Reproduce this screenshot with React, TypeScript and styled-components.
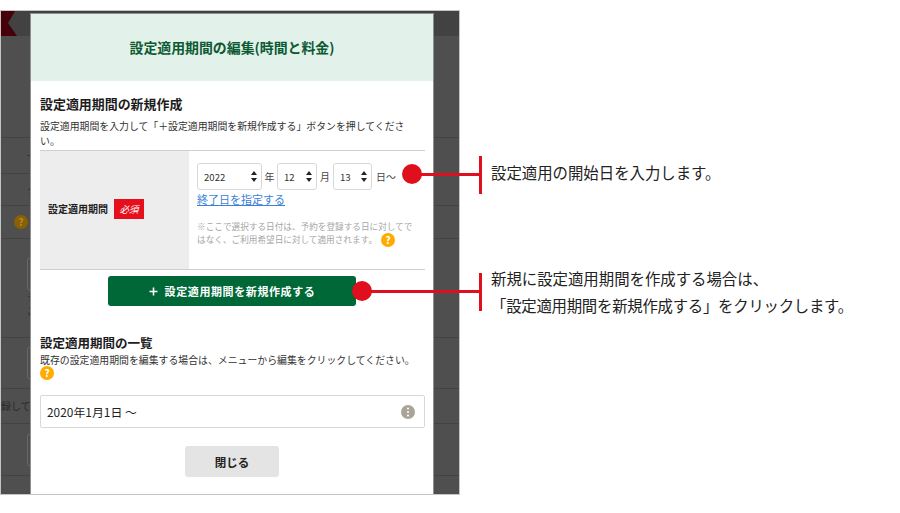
import React from "react";
import styled, { createGlobalStyle } from "styled-components";

const GlobalStyle = createGlobalStyle`
  html, body { margin: 0; padding: 0; background: #fff; }
  body {
    font-family: "Noto Sans CJK JP", "Noto Sans", sans-serif;
    color: #222;
    text-spacing-trim: space-all;
  }
  * { box-sizing: border-box; }
`;

const Page = styled.div`
  position: relative;
  width: 900px;
  height: 513px;
  overflow: hidden;
  display: flex;
  align-items: flex-start;
  padding-top: 10px;
`;

const Frame = styled.div`
  position: relative;
  width: 460px;
  height: 485px;
  flex: none;
  overflow: hidden;
  border: 1px solid #c4c4c4;
  background: #4f4f4f;
  display: flex;
  flex-direction: column;
`;

const BackHeader = styled.div`
  height: 25px;
  flex: none;
  background: #424242;
`;

const Flag = styled.svg`
  display: block;
`;

const BackRow = styled.div<{ $h: number; $pad?: number }>`
  height: ${(p) => p.$h}px;
  flex: none;
  border-bottom: 1px solid #434343;
  padding-left: ${(p) => p.$pad ?? 26}px;
  display: flex;
  flex-direction: column;
  justify-content: center;
  align-items: flex-start;
  color: #2a2a2a;
  font-size: 10px;
  line-height: 14px;
`;

const BackDash = styled.div`
  width: 6px;
  height: 1px;
  background: #1c3a66;
`;

const BackBox = styled.div`
  width: 60px;
  height: 32px;
  flex: none;
  border: 1px solid #666;
  border-radius: 2px;
`;

const BackHelp = styled.div`
  width: 14px;
  height: 14px;
  border-radius: 50%;
  background: #8b6100;
  color: #a98a4a;
  font-size: 10px;
  font-weight: 700;
  line-height: 14px;
  text-align: center;
  margin-left: 13px;
`;

const Modal = styled.section`
  position: absolute;
  left: 29px;
  top: 2px;
  width: 404px;
  height: 490px;
  background: #fff;
  border: 1px solid #8f8f8f;
  display: flex;
  flex-direction: column;
`;

const ModalHeader = styled.header`
  height: 67px;
  flex: none;
  padding-bottom: 2px;
  background: #e2f1ea;
  display: flex;
  align-items: center;
  justify-content: center;
  color: #0c5a32;
  font-size: 13.9px;
  font-weight: 700;
`;

const ModalBody = styled.div`
  padding: 14px 8px 0 9px;
  display: flex;
  flex-direction: column;
`;

const Heading = styled.h2<{ $top?: number; $size: number }>`
  margin: ${(p) => p.$top ?? 0}px 0 0;
  font-size: ${(p) => p.$size}px;
  line-height: 18px;
  font-weight: 700;
  color: #1c1c1c;
`;

const Lead = styled.p<{ $lh: number; $top: number }>`
  margin: ${(p) => p.$top}px 0 0;
  max-width: 380px;
  font-size: 9.9px;
  line-height: ${(p) => p.$lh}px;
  color: #333;
`;

const HelpIcon = styled.span<{ $size: number; $left?: number; $lift?: number }>`
  display: inline-block;
  width: ${(p) => p.$size}px;
  height: ${(p) => p.$size}px;
  margin-left: ${(p) => p.$left ?? 0}px;
  margin-top: ${(p) => -(p.$lift ?? 0)}px;
  border-radius: 50%;
  background: #ffab00;
  color: #fff;
  font-size: 10px;
  font-weight: 700;
  line-height: ${(p) => p.$size}px;
  text-align: center;
  vertical-align: top;
`;

const FormTable = styled.div`
  margin-top: 1px;
  height: 120px;
  display: flex;
  border-top: 1px solid #cfcfcf;
  border-bottom: 1px solid #cfcfcf;
`;

const LabelCell = styled.div`
  width: 149px;
  flex: none;
  background: #ededed;
  padding: 0 0 3px 8px;
  display: flex;
  align-items: center;
  gap: 6px;
`;

const FieldLabel = styled.span`
  font-size: 10px;
  font-weight: 700;
  color: #222;
`;

const RequiredBadge = styled.span`
  width: 30px;
  height: 20px;
  background: #e60f1c;
  color: #fff;
  font-size: 9.5px;
  font-style: italic;
  display: flex;
  align-items: center;
  justify-content: center;
`;

const FieldCell = styled.div`
  flex: 1;
  padding: 12px 8px 0;
  min-width: 0;
`;

const DateRow = styled.div`
  display: flex;
  align-items: center;
  height: 27px;
`;

const SelectBox = styled.div<{ $w: number }>`
  width: ${(p) => p.$w}px;
  height: 27px;
  flex: none;
  border: 1px solid #d8d8d8;
  border-radius: 3px;
  background: #fff;
  padding: 0 4px 0 6px;
  display: flex;
  align-items: center;
  justify-content: space-between;
  font-size: 9.6px;
  color: #333;
`;

const Unit = styled.span<{ $w: number }>`
  width: ${(p) => p.$w}px;
  flex: none;
  font-size: 9.9px;
  color: #444;
  text-align: center;
`;

const Tail = styled.span`
  margin-left: 4px;
  font-size: 9.9px;
  color: #444;
`;

const EndLink = styled.a`
  display: block;
  margin-top: 1px;
  font-size: 11px;
  line-height: 16px;
  color: #3b7fd6;
  text-decoration: underline;
`;

const Hint = styled.p`
  margin: 13px 0 0;
  font-size: 8.65px;
  line-height: 13px;
  color: #a6a6a6;
  max-width: 220px;
`;

const CreateButton = styled.button`
  align-self: center;
  margin: 6px 1px 0 0;
  width: 248px;
  height: 30px;
  border: none;
  border-radius: 3px;
  background: #006837;
  color: #fff;
  font-family: inherit;
  font-size: 11px;
  font-weight: 700;
  letter-spacing: 0.6px;
  display: flex;
  align-items: center;
  justify-content: center;
  gap: 7px;
`;

const PeriodCard = styled.div`
  margin-top: 14px;
  height: 33px;
  border: 1px solid #d8d8d8;
  border-radius: 2px;
  padding: 0 9px 0 6px;
  display: flex;
  align-items: center;
  justify-content: space-between;
  font-size: 11.9px;
  color: #222;
`;

const CloseButton = styled.button`
  align-self: center;
  margin: 18px 1px 0 0;
  width: 94px;
  height: 31px;
  border: none;
  border-radius: 3px;
  background: #e4e4e4;
  color: #222;
  font-family: inherit;
  font-size: 11.5px;
  font-weight: 700;
`;

const Notes = styled.div`
  margin-left: 31px;
  flex: none;
  display: flex;
  flex-direction: column;
  padding-top: 149px;
`;

const Note = styled.p<{ $top: number }>`
  margin: ${(p) => p.$top}px 0 0;
  font-size: 15.4px;
  line-height: 27px;
  color: #222;
  white-space: nowrap;
`;

const TightLine = styled.span`
  letter-spacing: -0.25px;
`;

const Dot = styled.div<{ $x: number; $y: number }>`
  position: absolute;
  left: ${(p) => p.$x - 10}px;
  top: ${(p) => p.$y - 10}px;
  width: 20px;
  height: 20px;
  border-radius: 50%;
  background: #e00f1d;
`;

const Leader = styled.div<{ $x: number; $y: number; $w: number }>`
  position: absolute;
  left: ${(p) => p.$x}px;
  top: ${(p) => p.$y}px;
  width: ${(p) => p.$w}px;
  height: 3px;
  background: #e00f1d;
`;

const Bar = styled.div<{ $y: number }>`
  position: absolute;
  left: 479px;
  top: ${(p) => p.$y}px;
  width: 3px;
  height: 38px;
  background: #e00f1d;
`;

const Arrows = () => (
  <svg width="6" height="11" viewBox="0 0 6 11">
    <path d="M3 0 L6 4 H0 Z M3 11 L0 7 H6 Z" fill="#222" />
  </svg>
);

const KebabIcon = () => (
  <svg width="14" height="14" viewBox="0 0 15 15">
    <circle cx="7.5" cy="7.5" r="7.5" fill="#aaa498" />
    <circle cx="7.5" cy="3.8" r="1.1" fill="#fff" />
    <circle cx="7.5" cy="7.5" r="1.1" fill="#fff" />
    <circle cx="7.5" cy="11.2" r="1.1" fill="#fff" />
  </svg>
);

const PlusIcon = () => (
  <svg width="9" height="9" viewBox="0 0 9 9">
    <path d="M4.5 0.5 V8.5 M0.5 4.5 H8.5" stroke="#fff" strokeWidth="1.6" fill="none" />
  </svg>
);

const selects = [
  { w: 65, value: "2022", unit: "年", uw: 15 },
  { w: 40, value: "12", unit: "月", uw: 16 },
  { w: 39, value: "13", unit: "", uw: 0 },
];

const backRows = [
  { h: 102, content: null },
  { h: 36, content: <BackDash /> },
  { h: 32, content: "ク" },
  { h: 33, pad: 0, content: <BackHelp>?</BackHelp> },
  {
    h: 99,
    content: (
      <>
        <BackBox />
        <span>※</span>
        <span>ご</span>
      </>
    ),
  },
  { h: 51, content: <BackBox /> },
  { h: 35, pad: 0, content: "録して" },
  { h: 52, content: <BackBox /> },
];

export default function App() {
  return (
    <Page>
      <GlobalStyle />
      <Frame>
        <BackHeader>
          <Flag width="17" height="25" viewBox="0 0 17 25">
            <path d="M0 0 H14 L7 12 L16 25 H0 Z" fill="#45000a" />
          </Flag>
        </BackHeader>
        {backRows.map((row, i) => (
          <BackRow key={i} $h={row.h} $pad={row.pad}>
            {row.content}
          </BackRow>
        ))}
        <Modal>
          <ModalHeader>設定適用期間の編集(時間と料金)</ModalHeader>
          <ModalBody>
            <Heading $size={12.95}>設定適用期間の新規作成</Heading>
            <Lead $lh={15} $top={6}>
              設定適用期間を入力して「＋設定適用期間を新規作成する」ボタンを押してください。
            </Lead>
            <FormTable>
              <LabelCell>
                <FieldLabel>設定適用期間</FieldLabel>
                <RequiredBadge>必須</RequiredBadge>
              </LabelCell>
              <FieldCell>
                <DateRow>
                  {selects.map((s) => (
                    <React.Fragment key={s.value}>
                      <SelectBox $w={s.w}>
                        {s.value}
                        <Arrows />
                      </SelectBox>
                      {s.unit && <Unit $w={s.uw}>{s.unit}</Unit>}
                    </React.Fragment>
                  ))}
                  <Tail>日～</Tail>
                </DateRow>
                <EndLink>終了日を指定する</EndLink>
                <Hint>
                  ※ここで選択する日付は、予約を登録する日に対してではなく、ご利用希望日に対して適用されます。
                  <HelpIcon $size={14} $left={4}>?</HelpIcon>
                </Hint>
              </FieldCell>
            </FormTable>
            <CreateButton>
              <PlusIcon />
              設定適用期間を新規作成する
            </CreateButton>
            <Heading $top={28} $size={12.5}>設定適用期間の一覧</Heading>
            <Lead $lh={14} $top={1}>
              既存の設定適用期間を編集する場合は、メニューから編集をクリックしてください。
              <HelpIcon $size={14} $lift={1}>?</HelpIcon>
            </Lead>
            <PeriodCard>
              2020年1月1日 ～
              <KebabIcon />
            </PeriodCard>
            <CloseButton>閉じる</CloseButton>
          </ModalBody>
        </Modal>
      </Frame>
      <Notes>
        <Note $top={0}>設定適用の開始日を入力します。</Note>
        <Note $top={79}>
          新規に設定適用期間を作成する場合は、
          <br />
          <TightLine>「設定適用期間を新規作成する」をクリックします。</TightLine>
        </Note>
      </Notes>
      <Dot $x={412} $y={174} />
      <Leader $x={412} $y={173} $w={68} />
      <Bar $y={156} />
      <Dot $x={362} $y={291} />
      <Leader $x={362} $y={290} $w={118} />
      <Bar $y={273} />
    </Page>
  );
}
